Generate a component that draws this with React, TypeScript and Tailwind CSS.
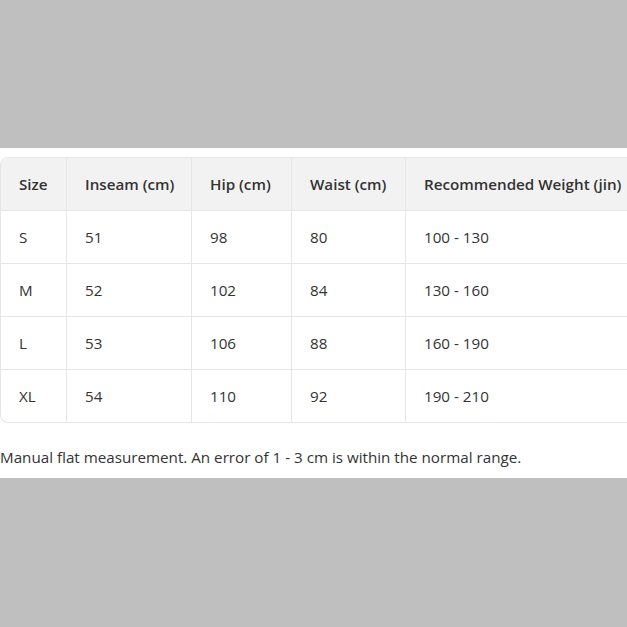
const rows = [
  ["S", "51", "98", "80", "100 - 130"],
  ["M", "52", "102", "84", "130 - 160"],
  ["L", "53", "106", "88", "160 - 190"],
  ["XL", "54", "110", "92", "190 - 210"],
];

const headers = ["Size", "Inseam (cm)", "Hip (cm)", "Waist (cm)", "Recommended Weight (jin)"];
const widths = ["w-[66px]", "w-[125px]", "w-[100px]", "w-[114px]", "w-[260px]"];

export default function App() {
  return (
    <div className="min-h-screen bg-[#bfbfbf] pt-[148px]" style={{ fontFamily: '"Open Sans", "Noto Sans", sans-serif' }}>
      <div className="w-full bg-white pt-[9px] pb-[9px] text-[15.2px] leading-6 text-[#333]">
        <div className="overflow-hidden rounded-l-lg border-y border-l border-[#e6e6e6]">
          <table className="border-separate border-spacing-0 table-fixed w-[665px] text-left">
            <colgroup>
              {widths.map((w) => (
                <col key={w} className={w} />
              ))}
            </colgroup>
            <thead>
              <tr className="bg-[#f2f2f2]">
                {headers.map((h) => (
                  <th key={h} className="border-r border-b border-[#e6e6e6] pl-[18px] pr-1 py-[14px] font-semibold whitespace-nowrap">
                    {h}
                  </th>
                ))}
              </tr>
            </thead>
            <tbody>
              {rows.map((r, ri) => (
                <tr key={r[0]}>
                  {r.map((c, i) => (
                    <td
                      key={i}
                      className={`border-r border-[#e6e6e6] pl-[18px] pr-1 py-[14px] font-normal ${ri < rows.length - 1 ? "border-b" : ""}`}
                    >
                      {c}
                    </td>
                  ))}
                </tr>
              ))}
            </tbody>
          </table>
        </div>
        <p className="mt-[22px]">Manual flat measurement. An error of 1 - 3 cm is within the normal range.</p>
      </div>
    </div>
  );
}
